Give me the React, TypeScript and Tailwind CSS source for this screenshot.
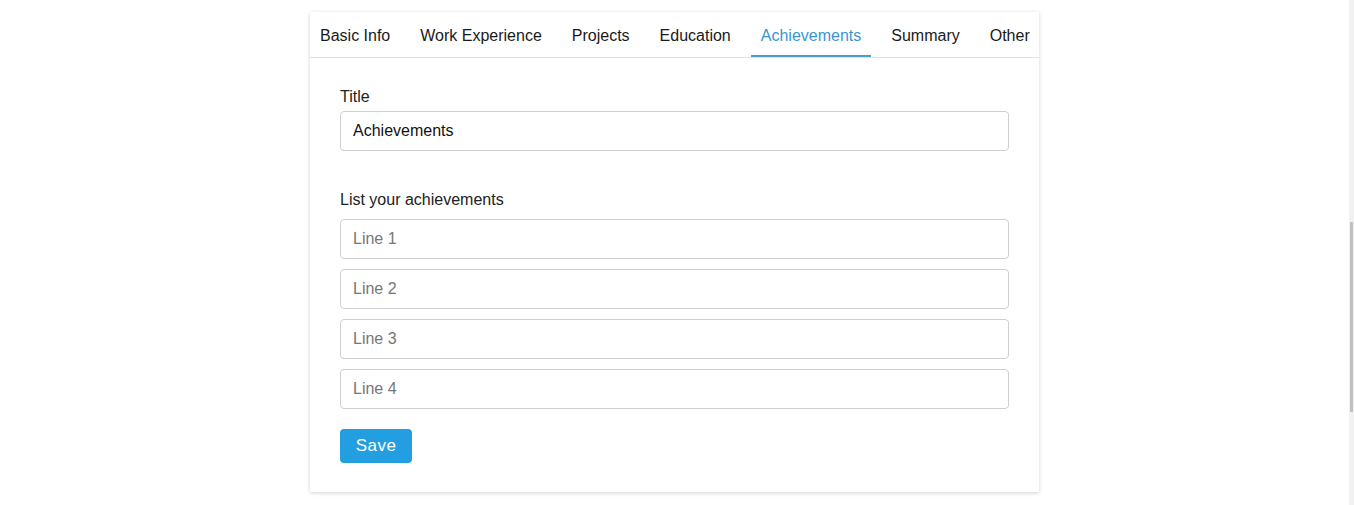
import { useState } from 'react'

const tabs = ['Basic Info', 'Work Experience', 'Projects', 'Education', 'Achievements', 'Summary', 'Other']

export default function App() {
    const [active, setActive] = useState('Achievements')
    const [title, setTitle] = useState('Achievements')

    return (
        <div className="relative min-h-screen bg-white font-['Liberation_Sans',Arial,sans-serif] text-[#222]">
            <div className="flex justify-center pt-3 pr-[5px]">
                <div className="w-[729px] bg-white shadow-[0_1px_4px_rgba(0,0,0,0.18)]">
                    {/* Tabs */}
                    <div className="flex gap-[10px] h-[46px] border-b border-[#e3e3e3] overflow-hidden">
                        {tabs.map((t) => (
                            <button
                                key={t}
                                onClick={() => setActive(t)}
                                className={
                                    t === active
                                        ? 'shrink-0 whitespace-nowrap px-[10px] text-[16px] text-[#3b95d0] border-b-2 border-[#4a9bce] pt-[4px]'
                                        : 'shrink-0 whitespace-nowrap px-[10px] text-[16px] text-[#1a1a1a] border-b-2 border-transparent pt-[4px]'
                                }
                            >
                                {t}
                            </button>
                        ))}
                    </div>

                    {/* Form */}
                    <div className="px-[30px] pt-[29px] pb-[29px]">
                        <label className="block text-[16px] leading-[20px] mb-[4px]">Title</label>
                        <input
                            value={title}
                            onChange={(e) => setTitle(e.target.value)}
                            className="block w-full h-[40px] px-[12px] text-[16px] text-[#111] border border-[#cfcfcf] rounded-[4px] outline-none"
                        />

                        <label className="block text-[16px] leading-[20px] mt-[39px] mb-[9px]">List your achievements</label>
                        <div className="flex flex-col gap-[10px]">
                            {[1, 2, 3, 4].map((n) => (
                                <input
                                    key={n}
                                    placeholder={`Line ${n}`}
                                    className="block w-full h-[40px] px-[12px] text-[16px] border border-[#cfcfcf] rounded-[4px] outline-none placeholder:text-[#777]"
                                />
                            ))}
                        </div>

                        <button className="mt-[20px] h-[34px] w-[72px] rounded-[4px] bg-[#239fe1] text-white text-[17px] tracking-[0.5px]">
                            Save
                        </button>
                    </div>
                </div>
            </div>

            {/* scrollbar */}
            <div className="absolute right-0 top-0 h-[505px] w-[5px] bg-[#f1f1f1]">
                <div className="mt-[222px] h-[190px] w-[3px] ml-[1px] bg-[#c1c1c1]" />
            </div>
        </div>
    )
}
